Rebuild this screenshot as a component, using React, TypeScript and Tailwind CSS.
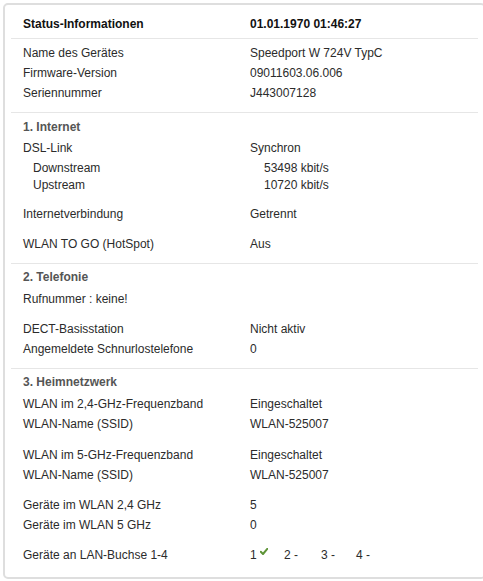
import React from "react";

type RowProps = {
  label: React.ReactNode;
  value?: React.ReactNode;
  indent?: boolean;
  className?: string;
};

function Row({ label, value, indent, className = "h-[20px]" }: RowProps) {
  return (
    <div className={`flex items-center pl-[12px] pt-[2px] leading-[18px] ${className}`}>
      <div className={`w-[227px] shrink-0 ${indent ? "pl-[10px]" : ""}`}>{label}</div>
      <div className={`${indent ? "pl-[14px]" : ""}`}>{value}</div>
    </div>
  );
}

function Heading({ children, className = "" }: { children: React.ReactNode; className?: string }) {
  return (
    <div className={`h-[20px] pt-[1px] flex items-center pl-[12px] font-bold text-[#555] ${className}`}>{children}</div>
  );
}

function Check() {
  return (
    <svg width="8" height="7" viewBox="0 0 8 7" className="mt-[2px] self-start">
      <path d="M0.8 3.8 L3 6 L7.3 0.8" fill="none" stroke="#5e9438" strokeWidth="2" strokeLinecap="round" strokeLinejoin="round" />
    </svg>
  );
}

export default function App() {
  return (
    <div className="w-[483px] h-[581px] overflow-hidden bg-white font-['Liberation_Sans',Arial,sans-serif] text-[12px] text-[#2b2b2b]">
      <div className="ml-[3px] mt-[3px] w-[483px] border-2 border-[#dedede] rounded-[5px] bg-white">
        <div className="mx-[6px] border-b border-[#e6e6e6] pt-[8px] pb-[5px]">
          <div className="flex pl-[12px] pt-[1px] h-[20px] items-center font-bold text-[#111]">
            <div className="w-[227px] shrink-0">Status-Informationen</div>
            <div>01.01.1970 01:46:27</div>
          </div>
        </div>

        <div className="mx-[6px] border-b border-[#e6e6e6] pt-[3px] pb-[10px]">
          <Row label="Name des Gerätes" value="Speedport W 724V TypC" />
          <Row label="Firmware-Version" value="09011603.06.006" />
          <Row label="Seriennummer" value="J443007128" />
        </div>

        <div className="mx-[6px] border-b border-[#e6e6e6] pt-[3px] pb-[10px]">
          <Heading>1. Internet</Heading>
          <Row label="DSL-Link" value="Synchron" className="h-[20px] mt-[1px]" />
          <Row label="Downstream" value="53498 kbit/s" indent className="h-[17px] mt-[1px]" />
          <Row label="Upstream" value="10720 kbit/s" indent className="h-[17px]" />
          <Row label="Internetverbindung" value="Getrennt" className="h-[20px] mt-[11px]" />
          <Row label="WLAN TO GO (HotSpot)" value="Aus" className="h-[20px] mt-[10px]" />
        </div>

        <div className="mx-[6px] border-b border-[#e6e6e6] pt-[2px] pb-[10px]">
          <Heading>2. Telefonie</Heading>
          <div className="h-[20px] mt-[2px] pt-[2px] flex items-center pl-[12px]">Rufnummer : keine!</div>
          <Row label="DECT-Basisstation" value="Nicht aktiv" className="h-[20px] mt-[10px]" />
          <Row label="Angemeldete Schnurlostelefone" value="0" />
        </div>

        <div className="mx-[6px] pt-[2px] pb-[13px]">
          <Heading>3. Heimnetzwerk</Heading>
          <Row label="WLAN im 2,4-GHz-Frequenzband" value="Eingeschaltet" className="h-[20px] mt-[2px]" />
          <Row label="WLAN-Name (SSID)" value="WLAN-525007" />
          <Row label="WLAN im 5-GHz-Frequenzband" value="Eingeschaltet" className="h-[20px] mt-[11px]" />
          <Row label="WLAN-Name (SSID)" value="WLAN-525007" />
          <Row label="Geräte im WLAN 2,4 GHz" value="5" className="h-[20px] mt-[10px]" />
          <Row label="Geräte im WLAN 5 GHz" value="0" />
          <Row
            label="Geräte an LAN-Buchse 1-4"
            className="h-[20px] mt-[10px]"
            value={
              <div className="flex h-[18px] items-center">
                <div className="w-[34px] flex items-center">
                  <span>1</span>
                  <span className="ml-[3px] flex h-[18px]"><Check /></span>
                </div>
                <div className="w-[37px]">2 -</div>
                <div className="w-[35px]">3 -</div>
                <div>4 -</div>
              </div>
            }
          />
        </div>
      </div>
    </div>
  );
}
